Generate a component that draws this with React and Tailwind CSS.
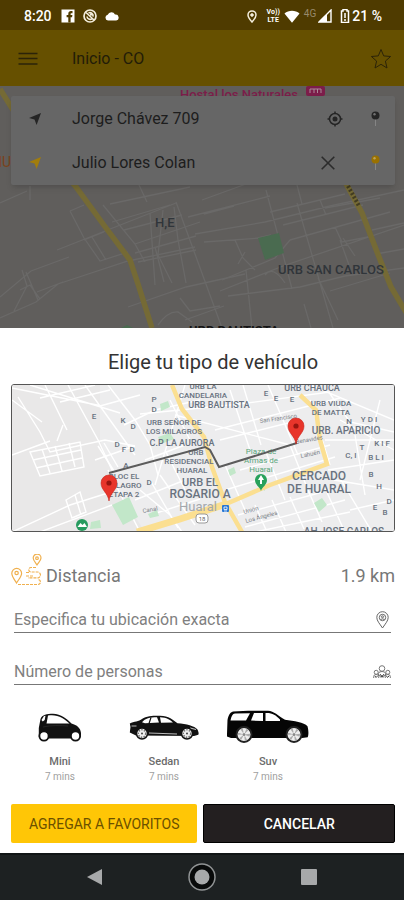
import React from "react";

function StatusBar() {
  return (
    <div className="flex h-[30px] items-center justify-between bg-[#4f3b00] pl-6 pr-[22px] pt-0.5 text-sm font-medium text-white">
      <div className="flex items-center gap-2">
        <span className="mr-px">8:20</span>
        <svg className="size-[14px]" viewBox="0 0 14 14" aria-hidden="true">
          <rect x="0.5" y="0.5" width="13" height="13" fill="#fff" />
          <path d="M7.3 13.5V8.2H5.6V6h1.7V4.8c0-1.8 1.1-2.7 2.7-2.7h1.5v2.1h-1c-.7 0-.9.3-.9.9V6h1.8l-.3 2.2H9.6v5.3z" fill="#4f3b00" />
        </svg>
        <svg className="size-[14px]" viewBox="0 0 14 14" fill="none" stroke="#f4eedd" aria-hidden="true">
          <circle cx="7" cy="7" r="6" strokeWidth="1.7" />
          <path d="M3 3.5l8 7.5M4 7.5a3.2 3.2 0 0 0 5 2.3M10 7.6A3.2 3.2 0 0 0 5.5 4M7 5.5l3 .5" strokeWidth="1.6" />
        </svg>
        <svg className="h-[10px] w-[14px]" viewBox="0 0 14 10" aria-hidden="true">
          <path d="M3 9.5a2.9 2.9 0 0 1-.3-5.7A4 4 0 0 1 10 3.6a3 3 0 0 1 1.2 5.9z" fill="#fff" />
        </svg>
      </div>
      <div className="flex items-center">
        <svg className="mr-[10px] h-[13px] w-[10px]" viewBox="0 0 10 13" fill="none" stroke="#f4eedd" aria-hidden="true">
          <path d="M5 12C2.6 9.2 1 7 1 4.9a4 4 0 0 1 8 0C9 7 7.400 9.200 5 12z" strokeWidth="1.5" />
          <circle cx="5" cy="5" r="1.3" fill="#f4eedd" />
        </svg>
        <span className="mr-1 flex flex-col items-center text-[7px] font-bold leading-[8px]">
          <span>Vo))</span>
          <span>LTE</span>
        </span>
        <svg className="h-[13px] w-[16px]" viewBox="0 0 16 13" aria-hidden="true">
          <path d="M0.500 3.500C4.500-.3 11.500-.3 15.500 3.500L8 12.800z" fill="#fff" />
        </svg>
        <span className="mb-1 ml-1 text-[10px] font-normal leading-[14px] text-[#98896a]">4G</span>
        <svg className="ml-0.5 size-[14px]" viewBox="0 0 14 14" aria-hidden="true">
          <path d="M13 1v12H1z" fill="none" stroke="#fff" strokeWidth="1.4" />
          <path d="M9 5v8H1z" fill="#fff" />
        </svg>
        <svg className="ml-2 h-[14px] w-[10px]" viewBox="0 0 10 14" aria-hidden="true">
          <path d="M3 2V0.500h4V2h1.500v11.500h-7V2z" fill="none" stroke="#fff" strokeWidth="1.500" />
          <path d="M5 4v5M5 10v2" stroke="#fff" strokeWidth="1.500" />
        </svg>
        <span className="ml-0.5">21 %</span>
      </div>
    </div>
  );
}

function Header() {
  return (
    <header className="flex h-14 items-center bg-[#665000] px-[18px] pt-0.5 text-[#221c08]">
      <button aria-label="Menú" className="flex h-10 w-[54px] items-center">
        <svg className="h-[14px] w-[20px]" viewBox="0 0 20 14" stroke="#2b2308" strokeWidth="1.500" aria-hidden="true">
          <path d="M0.500 1.500h19M0.500 6.500h19M0.500 12h19" />
        </svg>
      </button>
      <h1 className="flex-1 text-base">Inicio - CO</h1>
      <button aria-label="Favoritos" className="-mr-1.5">
        <svg className="size-[22px]" viewBox="0 0 22 22" fill="none" stroke="#2b2308" strokeWidth="1" strokeLinejoin="round" aria-hidden="true">
          <path d="M11 1.500l2.700 6.400 6.900.6-5.200 4.600 1.600 6.900-6-3.700-6 3.700 1.600-6.900L1.400 8.500l6.900-.6z" />
        </svg>
      </button>
    </header>
  );
}

function BackgroundMap() {
  return (
    <svg className="absolute inset-0 h-full w-full" viewBox="0 86 404 242" preserveAspectRatio="xMidYMid slice" fontFamily="Roboto, sans-serif" aria-hidden="true">
      <rect x="-400" y="86" width="1200" height="242" fill="#605e5c" />
      <g fill="none" stroke="#6a6968" strokeWidth="1.300">
        <path d="M0 297L31 271 69 257M0 318L36 302 58 284 128 261 195 247M14 311L27 286 22 270M26 272l12 28M20 290l10-5 10 14M37 292l26-10" />
        <path d="M57 250L176 203M70 211L84 238 100 261 128 252M70 211l14-6M84 240l20-8M92 237l14 23M103 205L135 244 145 262M112 222L170 205M124 230L182 215M135 244L200 222M135 253L196 236M138 262L196 250" />
        <path d="M150 213l5 72M163 210l-5 45 14 28M174 207l4 33 8 43M176 202L222 328M155 247l9 35M128 307L186 287 245 274M180 298l10 13 30-5M158 325q10-14 20-13l14 10M185 320l39-14" />
        <path d="M188 217L270 196M195 234L265 222 330 206 404 190M204 242L260 238M204 214l30-8M266 190L292 289M297 203L333 328M320 200l6 15M235 240l8 18 12 12M245 252L238 264M220 291L283 266 404 225M222 280L275 258 290 240M228 296L300 287 345 276 404 268M246 270l6 58M265 275q8-10 20 8M258 238l13-3M318 278l20 42M304 304l7 24M340 240l9 25M343 238l12 18M335 227l7 15 26-5M330 291l60-18M372 230l32-7M376 254l28-5M270 212l75-18M283 225l80-20M290 240l100-28" />
        <path d="M0 203l27-12M30 186v14M147 202l-8-17M110 204L190 187M202 200l55-20M302 204l-5-19M325 208l55-10" />
      </g>
      <g fill="none" stroke="#756a35" strokeWidth="5.500">
        <path d="M0 89L13 110 76 187 106 228 130 260 138 284 152 328" />
        <path d="M344 180L362 213 379 257 391 287 407 314" />
      </g>
      <path d="M348 186l11 20" stroke="#423c22" strokeWidth="4" strokeDasharray="2 2" />
      <path d="M258 238l21-5 5 20-19 7z" fill="#4a6b50" />
      <path d="M121 328l6-3 6 3z" fill="#4a6b50" />
      <g fontWeight="500" fontSize="13" fill="#30353a">
        <text x="155" y="227">H,E</text>
        <text x="278" y="274">URB SAN CARLOS</text>
        <text x="189" y="335" fontWeight="700" fill="#151515">URB BAUTISTA</text>
      </g>
      <text x="180" y="99" fontSize="13" fontWeight="500" fill="#7c1d4a">Hostal los Naturales</text>
      <rect x="306" y="86" width="19" height="10" rx="2" fill="#7c1d4a" />
      <path d="M310 93v-4h11v4M314 93v-4M317.500 93v-4" stroke="#a98c99" fill="none" />
      <text x="-8" y="167" fontSize="14" fill="#7a431b">HU</text>
    </svg>
  );
}

function Arrow({ color }) {
  return (
    <svg className="size-3 shrink-0" viewBox="0 0 12 12" aria-hidden="true">
      <path d="M12 0L7.600 12 5.500 6.500 0 5z" fill={color} />
    </svg>
  );
}

function Pin({ color }) {
  return (
    <svg className="h-4 w-[9px] shrink-0" viewBox="0 0 9 16" aria-hidden="true">
      <path d="M4.500 8v7" stroke="#858585" strokeWidth="1" />
      <circle cx="4.500" cy="4.500" r="4" fill={color} />
      <circle cx="3.500" cy="3.200" r="1.200" fill="#fff" opacity="0.350" />
    </svg>
  );
}

function AddressRow({ label, value, arrow, pin, action }) {
  return (
    <div className="flex h-11 items-center pl-[18px] pr-[15px]">
      <Arrow color={arrow} />
      <input aria-label={label} defaultValue={value} className="ml-[31px] min-w-0 flex-1 bg-transparent text-base text-[#1d1d1d] outline-none" />
      {action}
      <Pin color={pin} />
    </div>
  );
}

function AddressCard() {
  return (
    <section className="relative rounded-xs bg-[#666666] pt-px shadow-md">
      <AddressRow
        label="Origen"
        value="Jorge Chávez 709"
        arrow="#252525"
        pin="#252525"
        action={
          <button aria-label="Mi ubicación" className="mr-7">
            <svg className="size-4" viewBox="0 0 16 16" fill="none" stroke="#252525" strokeWidth="1.500" aria-hidden="true">
              <circle cx="8" cy="8" r="5.500" />
              <circle cx="8" cy="8" r="2.500" fill="#252525" stroke="none" />
              <path d="M8 .5v2.500M8 13v2.500M.5 8H3M13 8h2.500" />
            </svg>
          </button>
        }
      />
      <AddressRow
        label="Destino"
        value="Julio Lores Colan"
        arrow="#a17d0c"
        pin="#9a7100"
        action={
          <button aria-label="Borrar destino" className="mr-9">
            <svg className="size-[14px]" viewBox="0 0 14 14" stroke="#2b2b2b" strokeWidth="1.600" aria-hidden="true">
              <path d="M.7.7l12.600 12.600M13.300.7L.7 13.300" />
            </svg>
          </button>
        }
      />
    </section>
  );
}

const MAP_LABELS = [
  [203, 389, "URB LA", 8], [203, 398, "CANDELARIA", 8], [219, 408, "URB BAUTISTA", 9],
  [174, 425, "URB SEÑOR DE", 8], [174, 434, "LOS MILAGROS", 8], [182, 446, "C.P LA AURORA", 9],
  [196, 455, "URB", 8], [189, 464, "RESIDENCIAL", 8], [192, 473, "HUARAL", 8],
  [200, 486, "URB EL", 11], [200, 498, "ROSARIO A", 12],
  [124, 479, "BLOC EL", 8], [124, 488, "MILAGRO", 8], [124, 497, "ETAPA 2", 8],
  [312, 391, "URB CHAUCA", 9], [331, 406, "URB VIUDA", 8], [331, 415, "DE MATTA", 8], [346, 434, "URB. APARICIO", 10],
  [319, 480, "CERCADO", 12], [319, 493, "DE HUARAL", 12], [344, 535, "AH JOSE CARLOS", 10],
  [94, 419, "E", 8], [154, 402, "P", 8], [154, 412, "D", 8], [123, 423, "K", 8], [133, 429, "D", 8],
  [117, 447, "D", 8], [124, 452, "F", 8], [132, 452, "D", 8], [126, 468, "A", 8], [149, 485, "D", 8],
  [266, 396, "E", 8], [276, 401, "E", 8], [292, 402, "E", 8], [349, 424, "N", 8], [369, 422, "Y D I", 8],
  [362, 450, "T", 8], [382, 446, "K I F", 8], [351, 458, "C, I", 8], [376, 460, "B  L I", 8],
  [371, 477, "B", 8], [379, 489, "H", 8], [375, 510, "E", 8], [385, 515, "B", 8], [389, 504, "D", 8],
];

function RedPin({ x, y }) {
  return (
    <g transform={`translate(${x} ${y})`}>
      <path d="M0 0C-1-8-8-11-8-18a8 8 0 0 1 16 0C8-11 1-8 0 0z" fill="#e8352b" stroke="#c8261e" strokeWidth="0.600" />
      <circle cx="0" cy="-18" r="2.600" fill="#97150f" />
    </g>
  );
}

function RouteMap() {
  return (
    <svg className="block h-[148px] w-full rounded-[3px] border border-[#555]" viewBox="12 385 382 146" preserveAspectRatio="xMidYMid slice" fontFamily="Roboto, sans-serif" role="img" aria-label="Ruta">
      <rect x="-400" y="385" width="1200" height="147" fill="#e9e8e8" />
      <path d="M100 385h294v147H145L118 490 100 440z" fill="#ededee" />
      <g fill="none" stroke="#fff" strokeWidth="1.400">
        <path d="M12 400l30 22M18 397L40 432 50 452 105 440 135 446M12 455l38-14M12 388l90 18M30 385l90 28M40 398l55-13M60 402l50-12M45 385l22 45M68 385l30 55 14 30M85 385l50 70M108 385L135 420 150 445 158 475M100 406L140 395M124 425L155 410 200 400" />
        <path d="M30 452l50-10 4 25-44 9zM33 460l48-10M36 468l46-10M42 449l8 24M55 446l7 25M69 443l6 24M57 441l6-16" />
        <path d="M98 446l16 25M104 443l14 24M95 460l40-14M12 532L70 505 108 493M66 500l14-8 6 20-14 6zM75 495l6 20M108 470L140 532M112 505L40 532M140 490L170 515 182 532M150 480l28 48M160 475l35 50M135 500L185 480M150 515l50-16" />
        <path d="M140 414L240 404 330 392M175 415L290 445M230 390l20 60M243 385l18 60M268 385l30 70M310 400l20 65M215 430L340 398M220 440L300 420M240 470L330 445M225 490l110-33M265 450l20 50M290 445l20 50M225 465l20 45" />
        <path d="M310 385L394 420M330 394l20 28 44 10M340 420l54 30M325 440l69 0M328 470l66-10M338 475L372 532M355 435l10 60M380 400l-20 80M394 490l-60-10M350 510l44-10" />
        <path d="M238 515L330 490M245 527L345 500M255 532l95-20M255 505l12 27M272 500l14 32M290 497l14 32M308 490l14 32M325 488l18 40M170 400l20 40M185 385l-30 100M165 450l20 40M145 460l40-15" />
      </g>
      <path d="M112 505l17-8 9 20-15 8zM160 404l8-3 2 6-9 4zM158 437l12-4 4 6-13 5zM148 514l9-4 2 6-9 2zM314 503l8-5 5 7-8 7zM228 470l6-3 2 6-6 3zM91 522l9-2 1 8-11 1zM260 488l3-5 2 8z" fill="#c2e7c9" />
      <path d="M172 385l10 24 22 28 8 30 14 38M226 504L270 485 327 464 320 440 316 410 300 395M226 504l16 28" fill="none" stroke="#fbdf91" strokeWidth="4.500" />
      <path d="M137 532L180 519 226 504" fill="none" stroke="#fbdf91" strokeWidth="7" />
      <g fill="#7b8188" fontSize="6">
        <text x="260" y="423" transform="rotate(-8 260 423)">San Francisco</text>
        <text x="296" y="444" transform="rotate(-10 296 444)">Benavides</text>
        <text x="301" y="458" transform="rotate(-12 301 458)">Lahuén</text>
        <text x="244" y="514" transform="rotate(-15 244 514)">Unión</text>
        <text x="246" y="523" transform="rotate(-15 246 523)">Los Ángeles</text>
        <text x="143" y="513" transform="rotate(-10 143 513)">Canal</text>
      </g>
      <g fill="#68727f" fontWeight="500" textAnchor="middle">
        {MAP_LABELS.map(([x, y, text, size]) => (
          <text key={`${x}-${y}`} x={x} y={y} fontSize={size}>{text}</text>
        ))}
      </g>
      <text x="198" y="511" fontSize="13" fill="#a3a7ac" textAnchor="middle">Huaral</text>
      <g fill="#5aa57b" fontSize="8" textAnchor="middle">
        <text x="261" y="454">Plaza de</text>
        <text x="261" y="463">Armas de</text>
        <text x="261" y="472">Huaral</text>
      </g>
      <path d="M109 473L205 447 210 450 219 467 297 443" fill="none" stroke="#5c5c5c" strokeWidth="2" />
      <path d="M261 491c-1-4-6-6-6-11a6 6 0 0 1 12 0c0 5-5 7-6 11z" fill="#27a15b" />
      <path d="M261 475l3 5h-2v4h-2v-4h-2z" fill="#fff" />
      <circle cx="82" cy="525" r="6" fill="#279b5f" />
      <path d="M77.500 527l3-4 2 2 2-2 2.500 4z" fill="#fff" />
      <rect x="222" y="505" width="7" height="7" rx="1" fill="#2877d4" />
      <path d="M224 507h3v2.500h-3zM224 511h3" stroke="#fff" strokeWidth="0.800" fill="none" />
      <rect x="196" y="514" width="12" height="9" rx="3" fill="#fff" stroke="#999" />
      <text x="202" y="521" fontSize="6" fill="#666" textAnchor="middle">18</text>
      <RedPin x={296} y={444} />
      <RedPin x={109} y={501} />
    </svg>
  );
}

function DistanceIcon() {
  return (
    <svg className="h-8 w-8" viewBox="0 0 32 32" fill="none" stroke="#f0b04e" strokeWidth="1.200" aria-hidden="true">
      <path d="M5.500 29C3 25 .8 22.500.8 19.300a4.900 4.900 0 0 1 9.800 0C10.600 22.500 8 25 5.500 29z" />
      <circle cx="5.600" cy="19" r="1.700" />
      <path d="M26 11c-2-3-3.800-4.700-3.800-7a3.900 3.900 0 0 1 7.800 0c0 2.300-2 4-4 7z" />
      <circle cx="26" cy="4.200" r="1.300" />
      <path d="M25 13.500h-5a2.200 2.200 0 0 0 0 4.500h6.500a3 3 0 0 1 1 5.800H17M7 30.500h20a2.500 2.500 0 0 0 0-5M15 18.500h3M15 22h8" strokeDasharray="3 1" />
    </svg>
  );
}

function Field({ label, icon }) {
  return (
    <div className="flex h-[25px] items-center border-b border-[#777] text-[#777]">
      <input aria-label={label} placeholder={label} className="min-w-0 flex-1 bg-transparent text-base text-[#555] outline-none placeholder:text-[#808080]" />
      {icon}
    </div>
  );
}

function LocationIcon() {
  return (
    <svg className="mr-0.5 h-[18px] w-[13px]" viewBox="0 0 13 18" fill="none" stroke="#666" aria-hidden="true">
      <path d="M6.500 17C3.500 12.500.8 9.800.8 6.400a5.700 5.700 0 0 1 11.400 0c0 3.400-2.700 6.100-5.700 10.600z" />
      <circle cx="6.500" cy="6.500" r="3.200" />
      <circle cx="6.500" cy="5.800" r="1" />
      <path d="M4.500 9c.5-1.500 3.500-1.500 4 0" />
    </svg>
  );
}

function PeopleIcon() {
  return (
    <svg className="h-[14px] w-[18px]" viewBox="0 0 18 14" fill="none" stroke="#777" aria-hidden="true">
      <circle cx="9" cy="3.500" r="2.800" />
      <circle cx="3.200" cy="7.300" r="2" />
      <circle cx="14.800" cy="7.300" r="2" />
      <path d="M5.500 11V8.500q0-2 3.500-2t3.500 2V11M.7 13v-1.500q0-2 2.500-2t2.500 2V13M12.300 13v-1.500q0-2 2.500-2t2.500 2V13M6 10l2 2.500L9 10l1 2.500 2-2.500" />
      <path d="M7 9l2 3 2-3M2 11l1 1.500L4.500 11M13.500 11l1 1.500 1.500-1.500" stroke="#444" />
    </svg>
  );
}

function MiniCar() {
  return (
    <svg className="h-[29px] w-[44px]" viewBox="0 0 44 29" aria-hidden="true">
      <path d="M.8 24V15L2.500 6C4 1.800 9 .8 15 .8 23 1 29 6 33.500 10.500 39 12 42.500 15 43 20c.2 3-.3 5-2 5.500H2z" fill="#111" />
      <path d="M8.500 10.500l1.500-8c10-1.500 16 3 21.500 8z" fill="#fff" />
      <path d="M3.500 7l2.500-4 1.500-.3-.8 4.300-2 1.500z" fill="#fff" />
      <path d="M5 14c8-2 18-1.500 25-1" stroke="#333" strokeWidth=".6" fill="none" />
      <circle cx="6" cy="23" r="4.600" fill="#fff" stroke="#111" strokeWidth="1.800" />
      <circle cx="37.500" cy="23" r="4.600" fill="#fff" stroke="#111" strokeWidth="1.800" />
    </svg>
  );
}

function SedanCar() {
  return (
    <svg className="h-[25px] w-[71px]" viewBox="0 0 71 25" aria-hidden="true">
      <path d="M.8 8.500C5 6.500 10 6.500 13 4 18 .5 26 .6 31 .7c9 .2 13 4 17.500 7.600 9 .7 17 2.700 20 6.200.8 2 1.700 4 .8 5.200L65 21 7 20.500.8 17.500 1.500 12z" fill="#111" />
      <path d="M13 7.300c3-4 8-5 15-5l2 5.200-14 .7zM31 2.200c7 .2 10 2.500 13 5.300l-12 .3z" fill="#fff" />
      <path d="M22 2.500l-2 6" stroke="#111" strokeWidth="1.200" />
      <path d="M2.500 11h5M61 13l6 1.500M20 18l28 1" stroke="#bbb" strokeWidth="1.200" />
      {[13, 58].map((x) => (
        <g key={x}>
          <circle cx={x} cy="18.500" r="5.500" fill="#eee" stroke="#111" strokeWidth="1.500" />
          <circle cx={x} cy="18.500" r="3.700" fill="none" stroke="#777" strokeWidth="1.400" strokeDasharray="1.500 1.200" />
          <circle cx={x} cy="18.500" r="1" fill="#444" />
        </g>
      ))}
    </svg>
  );
}

function SuvCar() {
  return (
    <svg className="h-[34px] w-[84px]" viewBox="0 0 84 34" aria-hidden="true">
      <path d="M1 24l.5-14C2.500 5 4 2.500 7 1.500L22 .7h20c6 .3 10 5 17 9 9 1 19 2.500 22.500 6.500.8 3 1.500 8 .2 11L76 28H5l-4-1.500z" fill="#050505" />
      <path d="M4.500 10.500C5.500 6 6.500 3.800 9 3.500l15-.3-4 7.300zM25 10.500L28 3h9v8zM39.500 11V3c7-.3 10 2 14.500 6.500V11z" fill="#fff" />
      {[18, 68].map((x) => (
        <g key={x}>
          <circle cx={x} cy="24.500" r="7.500" fill="#eee" stroke="#222" strokeWidth="2" />
          <circle cx={x} cy="24.500" r="4" fill="none" stroke="#aaa" strokeWidth="4" strokeDasharray="1.500 2.500" />
          <circle cx={x} cy="24.500" r="1.500" fill="#888" />
        </g>
      ))}
    </svg>
  );
}

function Vehicle({ name, children }) {
  return (
    <button className="flex w-[104px] flex-col items-center">
      <span className="flex h-[38px] items-center">{children}</span>
      <span className="mt-2 text-[11px] font-medium leading-4 text-[#6b6b6b]">{name}</span>
      <span className="text-[10px] leading-[14px] text-[#a0a0a0]">7 mins</span>
    </button>
  );
}

function NavBar() {
  return (
    <nav className="flex h-[47px] items-center justify-around border-t-2 border-[#111516] bg-[#1d2122] px-11 pb-0.5">
      <button aria-label="Atrás">
        <svg className="size-4" viewBox="0 0 16 16" aria-hidden="true"><path d="M15 0v16L0 8z" fill="#a7a9aa" /></svg>
      </button>
      <button aria-label="Inicio">
        <svg className="size-7" viewBox="0 0 28 28" aria-hidden="true">
          <circle cx="14" cy="14" r="13" fill="#080a0a" stroke="#909394" strokeWidth="1.500" />
          <circle cx="14" cy="14" r="7.500" fill="#a7a9aa" />
        </svg>
      </button>
      <button aria-label="Recientes">
        <svg className="size-4" viewBox="0 0 16 16" aria-hidden="true"><rect width="16" height="16" rx="1" fill="#a7a9aa" /></svg>
      </button>
    </nav>
  );
}

export default function App() {
  return (
    <div className="min-h-screen bg-white font-[Roboto,sans-serif]">
      <StatusBar />
      <Header />
      <div className="relative h-[242px] overflow-hidden pl-[11px] pr-[9px] pt-[10px]">
        <BackgroundMap />
        <AddressCard />
      </div>
      <main className="bg-white pb-[10px] pl-[11px] pr-[9px] pt-5">
        <h2 className="pl-5 text-center text-xl leading-7 text-[#333]">Elige tu tipo de vehículo</h2>
        <div className="mt-2">
          <RouteMap />
        </div>
        <div className="mt-5 flex h-9 items-end text-lg leading-6 text-[#777]">
          <div className="mb-0.5">
            <DistanceIcon />
          </div>
          <span className="ml-[3px] flex-1">Distancia</span>
          <span>1.9 km</span>
        </div>
        <div className="mt-5 flex flex-col gap-[27px] pl-[3px] pr-1">
          <Field label="Especifica tu ubicación exacta" icon={<LocationIcon />} />
          <Field label="Número de personas" icon={<PeopleIcon />} />
        </div>
        <div className="-ml-[3px] mt-[23px] flex">
          <Vehicle name="Mini"><MiniCar /></Vehicle>
          <Vehicle name="Sedan"><SedanCar /></Vehicle>
          <Vehicle name="Suv"><SuvCar /></Vehicle>
        </div>
        <div className="mt-5 grid h-[39px] grid-cols-[186fr_191fr] gap-1.5 text-sm">
          <button className="rounded-xs bg-[#ffc606] text-[#6b5000]">AGREGAR A FAVORITOS</button>
          <button className="rounded-xs border border-black bg-[#231f20] font-medium text-white">CANCELAR</button>
        </div>
      </main>
      <NavBar />
    </div>
  );
}
